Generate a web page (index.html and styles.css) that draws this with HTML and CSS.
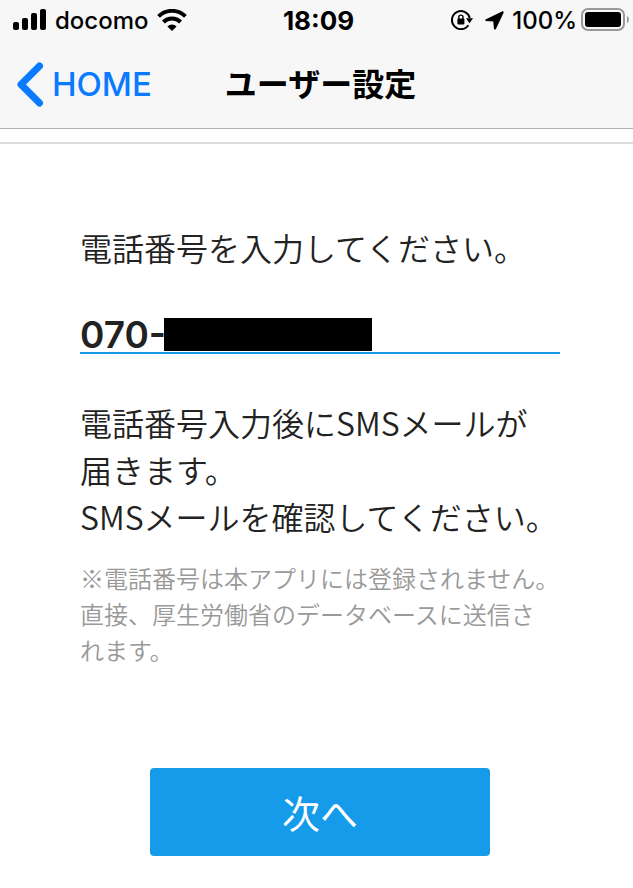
FILE: index.html
```html
<!DOCTYPE html>
<html lang="ja">
<head>
<meta charset="utf-8">
<meta name="viewport" content="width=device-width, initial-scale=1">
<title>ユーザー設定</title>
<link rel="stylesheet" href="styles.css">
</head>
<body>
<header class="top">
  <div class="status">
    <div class="status-side">
      <svg class="signal" width="34" height="22" viewBox="0 0 34 22" aria-hidden="true">
        <rect x="0" y="13" width="6" height="8" rx="2"/>
        <rect x="9" y="9" width="6" height="12" rx="2"/>
        <rect x="18" y="4" width="6" height="17" rx="2"/>
        <rect x="27" y="0" width="6" height="21" rx="2"/>
      </svg>
      <span class="status-text">docomo</span>
      <svg class="wifi" width="30" height="22" viewBox="0 0 30 22" aria-hidden="true">
        <path class="arc" d="M1.6 7.4a19 19 0 0 1 26.8 0M6.4 13a12.2 12.2 0 0 1 17.2 0"/>
        <path d="M10.4 17.4a6.5 6.5 0 0 1 9.2 0L15 22z"/>
      </svg>
    </div>
    <time class="clock status-text">18:09</time>
    <div class="status-side status-right">
      <svg class="lock" width="22" height="20" viewBox="0 0 22 20" aria-hidden="true">
        <path class="ring" d="M17.4 15.2A9 9 0 1 1 18.7 8"/>
        <path d="M15 8.2h7l-3.5 5z"/>
        <rect x="6.4" y="8.6" width="7" height="5.8" rx=".8"/>
        <path class="shackle" d="M7.8 9V7.2a2.1 2.1 0 0 1 4.2 0V9"/>
      </svg>
      <svg class="arrow" width="19" height="19" viewBox="0 0 19 19" aria-hidden="true">
        <path d="M17 .5 1 8.200c-1.200.7-1 1.800.3 1.800l7 .4.600 7.200c.1 1.400 1.300 1.600 2 .4L18.500 2c.5-1.100-.4-2-1.500-1.500z"/>
      </svg>
      <span class="status-text">100%</span>
      <svg class="battery" width="49" height="24" viewBox="0 0 49 24" aria-hidden="true">
        <rect class="case" x="1" y="1" width="42" height="21" rx="6"/>
        <rect x="4" y="4" width="36" height="15" rx="3"/>
        <path class="cap" d="M46 8c2.6 1 2.6 6 0 7z"/>
      </svg>
    </div>
  </div>
  <nav class="nav">
    <a class="back" href="#home">
      <svg width="28" height="46" viewBox="0 0 28 46" aria-hidden="true"><path d="M23.500 5 5 23.500 23.500 42"/></svg>
      <span>HOME</span>
    </a>
    <h1 class="title">ユーザー設定</h1>
  </nav>
</header>
<main class="content">
  <form class="form" action="#">
    <label class="lead" for="phone">電話番号を入力してください。</label>
    <div class="field">
      <input class="phone" id="phone" type="tel" value="070-">
      <span class="mask"></span>
    </div>
    <p class="lead">電話番号入力後にSMSメールが<br>届きます。<br>SMSメールを確認してください。</p>
    <p class="note">※電話番号は本アプリには登録されません。<br>直接、厚生労働省のデータベースに送信さ<br>れます。</p>
    <button class="next" type="submit">次へ</button>
  </form>
</main>
</body>
</html>
```
FILE: styles.css
```css
* {
  box-sizing: border-box;
}

body {
  margin: 0;
  background: #fff;
  color: #222;
  font-family: "Noto Sans CJK JP", sans-serif;
}

.top {
  background: #f7f7f7;
  border-bottom: 1px solid #b2b2b2;
  color: #000;
}

.status {
  display: grid;
  grid-template-columns: 1fr auto 1fr;
  align-items: center;
  height: 40px;
  padding: 0 3px 0 13px;
  font: 500 24px/38px Inter, sans-serif;
}

.status-text {
  padding-top: 2px;
}

.status-side {
  display: flex;
  align-items: center;
  gap: 8px;
}

.status-right {
  justify-content: flex-end;
  gap: 4px;
}

.lock {
  margin-right: 8px;
}

.arrow {
  margin-right: 4px;
}

.clock {
  margin-right: 6px;
  font-size: 26px;
  font-weight: 700;
}

.arc,
.ring,
.shackle,
.case {
  fill: none;
  stroke: #000;
}

.arc {
  stroke-width: 4;
}

.ring {
  stroke-width: 2;
}

.shackle {
  stroke-width: 1.4;
}

.case {
  stroke: #999;
  stroke-width: 2;
}

.cap {
  fill: #999;
}

.nav {
  display: grid;
  grid-template-columns: 1fr auto 1fr;
  align-items: center;
  height: 88px;
  padding: 0 8px 2px 16px;
}

.back {
  display: flex;
  align-items: center;
  gap: 8px;
  padding-top: 2px;
  color: #0a7aff;
  font: 500 33px/40px Inter, sans-serif;
  text-decoration: none;
}

.back path {
  fill: none;
  stroke: #0a7aff;
  stroke-width: 7;
  stroke-linecap: round;
  stroke-linejoin: round;
}

.title {
  margin: 0;
  padding-bottom: 2px;
  font-size: 32px;
  line-height: 48px;
  font-weight: 700;
}

.content {
  margin-top: 13px;
  padding: 80px 73px 32px 80px;
  border-top: 2px solid #ddd;
}

.form {
  display: flex;
  flex-direction: column;
}

.lead {
  margin: 0;
  font-size: 32px;
  font-weight: 350;
  line-height: 47px;
  white-space: nowrap;
}

.field {
  position: relative;
  height: 38px;
  margin: 45px 0 45px;
  border-bottom: 2px solid #159be9;
}

.phone {
  display: block;
  width: 100%;
  height: 36px;
  padding: 0;
  border: 0;
  outline: 0;
  background: none;
  color: #222;
  font: 600 37px/36px Inter, sans-serif;
}

.mask {
  position: absolute;
  left: 84px;
  bottom: 1px;
  width: 208px;
  height: 33px;
  background: #000;
}

.note {
  margin: 20px 0 0;
  color: #999;
  font-size: 24px;
  font-weight: 350;
  line-height: 36px;
  white-space: nowrap;
}

.next {
  align-self: center;
  width: 340px;
  max-width: 100%;
  height: 88px;
  margin-top: 100px;
  padding: 0;
  border: 0;
  border-radius: 4px;
  background: #159be9;
  color: #fff;
  font: 400 38px/56px "Noto Sans CJK JP", sans-serif;
}
```
